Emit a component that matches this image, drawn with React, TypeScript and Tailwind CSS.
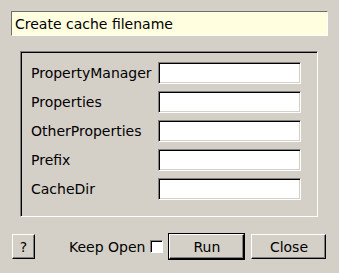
import React, { useState } from 'react';

const fields = ['PropertyManager', 'Properties', 'OtherProperties', 'Prefix', 'CacheDir'];

// sunken white entry, Tk style
function Entry() {
  return (
    <div className="h-[22px] w-[143px] bg-white border border-t-[#808080] border-l-[#808080] border-r-white border-b-white shadow-[inset_1px_1px_0_#000,inset_-1px_-1px_0_#d4d0c8]" />
  );
}

function Button({ label, className }: { label: string; className?: string }) {
  return (
    <button
      className={
        'h-[25px] shrink-0 flex items-center justify-center bg-[#d4d0c8] text-black border border-t-white border-l-white border-r-black border-b-black shadow-[inset_-1px_-1px_0_#808080] ' +
        (className ?? '')
      }
    >
      {label}
    </button>
  );
}

export default function App() {
  const [keepOpen, setKeepOpen] = useState(false);

  return (
    <div
      className="w-[339px] h-[273px] bg-[#d4d0c8] text-black text-[14px] leading-none pt-[11px] overflow-hidden"
      style={{ fontFamily: '"DejaVu Sans", sans-serif' }}
    >
      {/* Title */}
      <div className="mx-[11px] h-[25px] flex items-center pl-[3px] bg-[#ffffe0] border border-t-[#6e6e6e] border-l-[#6e6e6e] border-r-white border-b-white">
        Create cache filename
      </div>

      {/* Group frame */}
      <div className="mt-[15px] ml-[20px] w-[298px] h-[166px] border border-t-[#808080] border-l-[#808080] border-r-white border-b-white shadow-[inset_1px_1px_0_#000]">
        <div className="grid grid-cols-[127px_143px] gap-y-[7px] pt-[10px] pl-[10px]">
          {fields.map((f) => (
            <React.Fragment key={f}>
              <div className="h-[22px] flex items-center">{f}</div>
              <Entry />
            </React.Fragment>
          ))}
        </div>
      </div>

      {/* Bottom row */}
      <div className="flex items-center mt-[16px] pl-[12px]">
        <Button label="?" className="w-[23px]" />
        <span className="ml-[34px] whitespace-nowrap">Keep Open</span>
        <button
          onClick={() => setKeepOpen(!keepOpen)}
          className="ml-[5px] shrink-0 w-[13px] h-[13px] bg-white border border-t-[#808080] border-l-[#808080] border-r-white border-b-white shadow-[inset_1px_1px_0_#000] flex items-center justify-center text-[10px]"
        >
          {keepOpen ? '✓' : ''}
        </button>
        <div className="ml-[5px] shrink-0 border border-black">
          <Button label="Run" className="w-[75px]" />
        </div>
        <Button label="Close" className="ml-[6px] w-[75px]" />
      </div>
    </div>
  );
}
